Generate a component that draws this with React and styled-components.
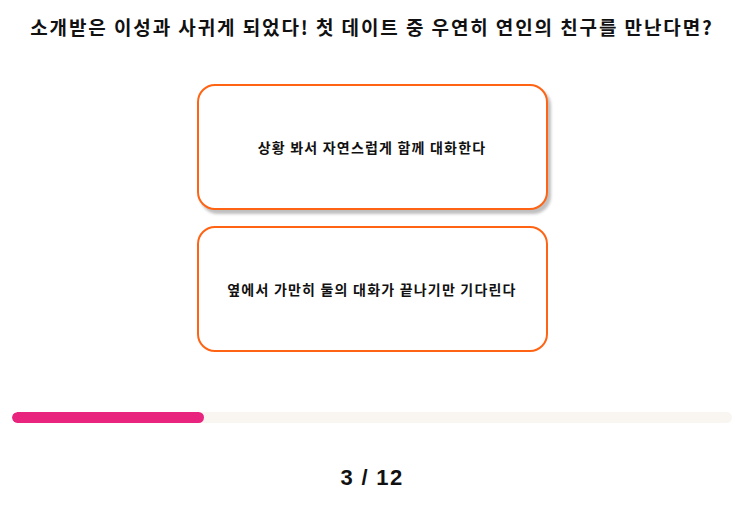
import styled, { createGlobalStyle } from 'styled-components'

const GlobalStyle = createGlobalStyle`
  body{
    margin:0;
    background:#ffffff;
    font-family:"Noto Sans CJK KR","Liberation Sans",sans-serif;
    color:#111;
  }
`

const Page = styled.div`
  display:flex;
  flex-direction:column;
  align-items:center;
  padding:0 8px 0 12px;
  height:507px;
  box-sizing:border-box;
`

const Question = styled.h1`
  margin:13px 0 0 0;
  font-size:19px;
  line-height:28px;
  font-weight:700;
  letter-spacing:1.9px;
  text-align:center;
  white-space:nowrap;
`

const Options = styled.div`
  display:flex;
  flex-direction:column;
  gap:16px;
  margin-top:43px;
`

const OptionButton = styled.button`
  width:351px;
  height:126px;
  box-sizing:border-box;
  background:#fff;
  border:2px solid #ff6414;
  border-radius:18px;
  font-family:inherit;
  font-size:14px;
  font-weight:700;
  letter-spacing:1.2px;
  color:#111;
  cursor:pointer;
  box-shadow:${({active})=>(active ? '3px 4px 3px rgba(0,0,0,0.25)' : 'none')};
`

const Track = styled.div`
  width:100%;
  height:11px;
  margin-top:60px;
  border-radius:6px;
  background:#f9f6f2;
  overflow:hidden;
`

const Fill = styled.div`
  height:100%;
  border-radius:6px;
  background:#e8247e;
`

const Counter = styled.div`
  margin-top:42px;
  font-family:"Liberation Sans",Arial,sans-serif;
  font-size:22px;
  font-weight:700;
  letter-spacing:1.3px;
  color:#111;
`

const options = [
  '상황 봐서 자연스럽게 함께 대화한다',
  '옆에서 가만히 둘의 대화가 끝나기만 기다린다',
]

export default function App(){
  const current = 3
  const total = 12
  return (
    <>
      <GlobalStyle/>
      <Page>
        <Question>소개받은 이성과 사귀게 되었다! 첫 데이트 중 우연히 연인의 친구를 만난다면?</Question>
        <Options>
          {options.map((o,i)=>(
            <OptionButton key={i} active={i===0}>{o}</OptionButton>
          ))}
        </Options>
        <Track>
          <Fill style={{width:`${(192/720)*100}%`}}/>
        </Track>
        <Counter>{current} / {total}</Counter>
      </Page>
    </>
  )
}
